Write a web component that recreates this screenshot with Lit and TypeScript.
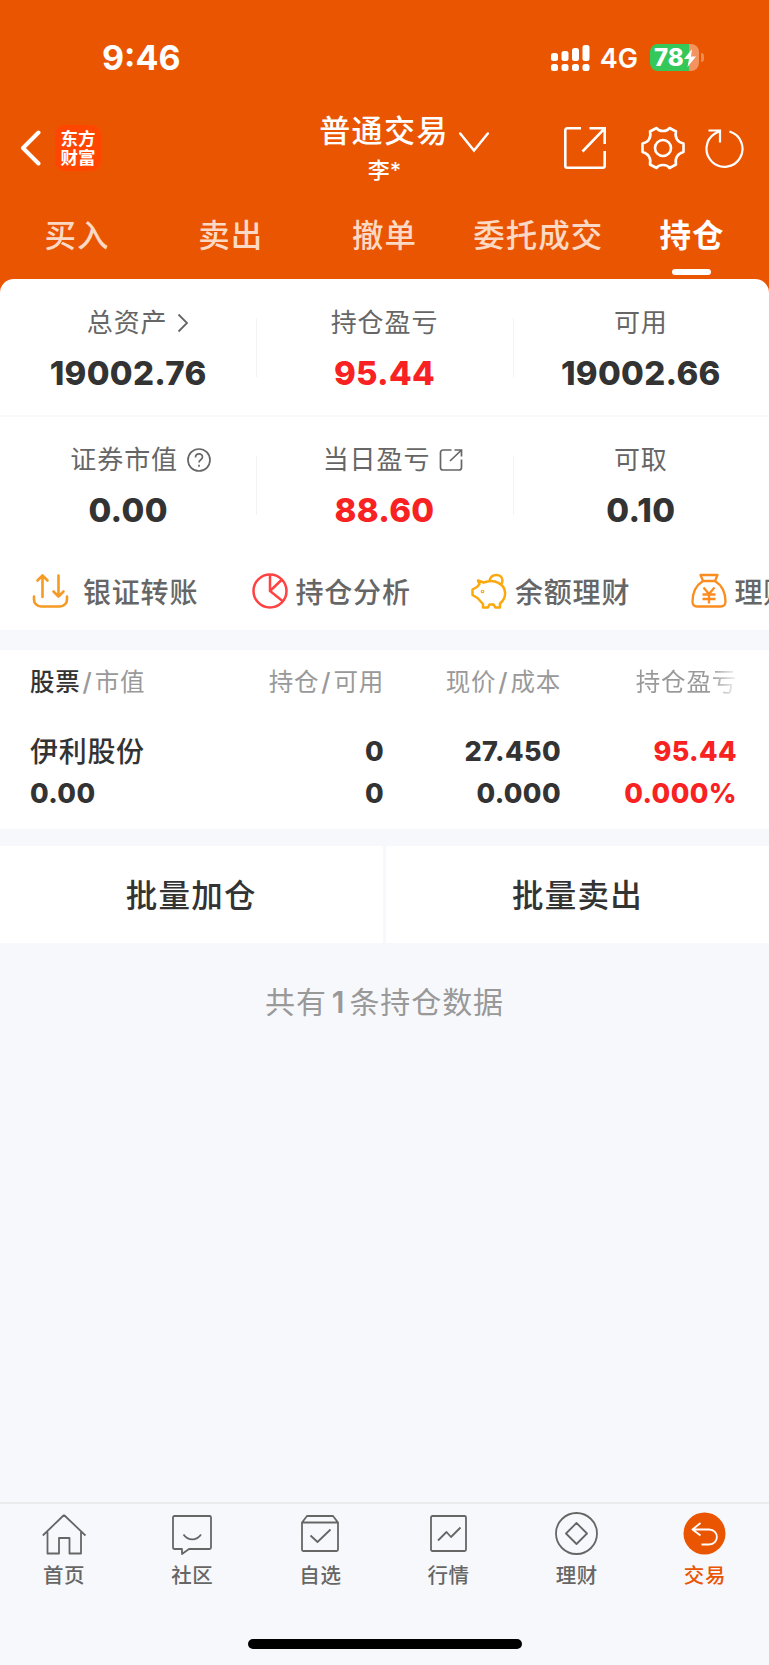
import { LitElement, html, css, svg } from "lit";
import { customElement } from "lit/decorators.js";

const chevronLeft = html`<svg class="back" width="22" height="36" viewBox="0 0 22 36"><path d="M18.5 2.5 3 18l15.500 15.500" fill="none" stroke="#fff" stroke-width="4" stroke-linecap="round" stroke-linejoin="round"/></svg>`;

const navIcons = [
  svg`<path d="M22 3 43.500 23.500M22 3 .8 23.500M5.500 20v21.500H17V26h10.500v15.500H39V20"/>`,
  svg`<path d="M4.500 4h35a1.500 1.500 0 0 1 1.500 1.500v30a1.500 1.500 0 0 1-1.500 1.500H19l-7 5v-5H4.500A1.500 1.500 0 0 1 3 35.500v-30A1.500 1.500 0 0 1 4.500 4zM13.500 22.500c4.500 6.500 13 6.500 17.500 0"/>`,
  svg`<path d="M4 10.500 9 4h26l5 6.500V37.500a1.500 1.500 0 0 1-1.500 1.500h-33A1.500 1.500 0 0 1 4 37.500zM4 10.500h36M12.500 23.500l7 6.500L32.500 17.500"/>`,
  svg`<rect x="4" y="4" width="35" height="35" rx="1.500"/><path d="M11 28.500l8.500-8.500 4.500 5 9.500-9.500"/>`,
  svg`<circle cx="21.500" cy="21.500" r="20.500"/><path d="M21.500 11 32 21.500 21.500 32 11 21.500z"/>`,
  svg`<circle cx="21.500" cy="21.500" r="21" fill="#ea5502" stroke="none"/><path d="M17.500 11 9.500 17.500l8 6M9.500 17.500H26c10.500 0 10.500 15 0 15h-7.500" stroke="#fff"/>`,
];

@customElement("app-root")
export class AppRoot extends LitElement {
  static styles = css`
    :host { display: flex; flex-direction: column; width: 769px; height: 1665px; overflow: hidden;
      background: #f7f8fb; color: #333; font-family: Inter, "Noto Sans CJK SC", sans-serif; white-space: nowrap; }
    * { box-sizing: border-box; }
    svg { display: block; flex: none; }
    .head { background: #ea5502; height: 293px; flex: none; color: #fff; }
    .status { height: 100px; display: flex; align-items: center; padding: 15px 65px 0 102px; }
    .time { font-size: 34px; font-weight: 700; line-height: 40px; flex: 1; }
    .net { font-size: 27px; font-weight: 600; margin: 2px 12px 0 10px; line-height: 32px; }
    .bat { display: flex; align-items: center; gap: 2px; }
    .cell { width: 49px; height: 27px; border-radius: 8px; display: flex; align-items: center; padding-left: 4px;
      background: linear-gradient(90deg, #34c759 38.500px, #f29360 38.500px); font-size: 24px; font-weight: 800; }
    .nub { width: 3px; height: 9px; border-radius: 0 3px 3px 0; background: #f08b54; }
    .bar { height: 97px; display: grid; grid-template-columns: 250px 1fr 250px; align-items: center; }
    .left { display: flex; align-items: center; padding: 0 0 1px 20px; gap: 13px; }
    .logo { width: 46px; height: 46px; border-radius: 10px; background: #ff4600; font: 700 17.500px/19px "Noto Sans CJK SC", sans-serif;
      padding: 3px 5px 0; white-space: normal; text-align: center; }
    .mid { display: flex; flex-direction: column; align-items: center; padding-top: 1px; }
    .title { display: flex; align-items: center; gap: 10px; font-size: 31px; font-weight: 500; letter-spacing: 1.400px; line-height: 42px; height: 42px; padding-left: 39px; }
    .title svg { margin-top: 22px; }
    .who { font-size: 22px; font-weight: 500; line-height: 36px; }
    .right { display: flex; align-items: center; padding: 0 0 1px 45px; }
    .gear { margin-left: 35px; }
    .reload { margin-left: 20px; }
    .tabs { display: grid; grid-template-columns: repeat(5, 1fr); font-size: 31.500px; font-weight: 500; letter-spacing: 1px; line-height: 44px; padding-top: 17px; }
    .tab { display: flex; flex-direction: column; align-items: center; color: #fcd9c4; }
    .tab.on { color: #fff; font-weight: 700; }
    .tab.on::after { content: ""; width: 39px; height: 6px; border-radius: 3px; background: #fff; margin: 11px 2px 0 0; }
    .card { background: #fff; border-radius: 14px 14px 0 0; margin-top: -14px; height: 351px; flex: none; overflow: hidden; }
    .stats { display: grid; grid-template-columns: repeat(3, 1fr); height: 136px; }
    .stats.first { height: 138px; border-bottom: 2px solid #f7f8fa; }
    .stat { display: flex; flex-direction: column; align-items: center; padding-top: 23px; }
    .first .stat { padding-top: 24px; }
    .stat + .stat { background: linear-gradient(#f2f3f5, #f2f3f5) 0 39px / 1px 59px no-repeat; }
    .label { display: flex; align-items: center; gap: 9px; font-size: 26px; letter-spacing: .9px; line-height: 40px; color: #666; }
    .shift-lg { padding-left: 25px; }
    .shift-md { padding-left: 19px; }
    .shift-sm { padding-left: 17px; }
    .value { font-size: 33px; font-weight: 800; line-height: 40px; margin-top: 10px; letter-spacing: .3px; }
    .red { color: #f82222; }
    .quick { display: flex; height: 76px; align-items: center; padding-left: 32px; color: #666; font-size: 28px; font-weight: 500; letter-spacing: .8px; }
    .q { display: flex; align-items: center; gap: 7px; width: 219.500px; flex: none; }
    .q:first-child { gap: 14px; }
    .table { background: #fff; margin-top: 20px; height: 179px; flex: none; padding: 14px 32px 0 30px; }
    .row { display: grid; grid-template-columns: 150px 204px 177px 176px; text-align: right; font-size: 27px; font-weight: 800; letter-spacing: .4px; line-height: 42px; }
    .row > :first-child { text-align: left; }
    .th { font-size: 24.500px; font-weight: 400; letter-spacing: .8px; line-height: 36px; color: #999; margin-bottom: 31px; }
    .slash { font-size: 25px; font-weight: 500; margin: 0 2px; }
    .dark { color: #333; font-weight: 500; }
    .name { font-size: 28px; font-weight: 500; letter-spacing: .7px; }
    .fade { background: linear-gradient(90deg, #999 74%, #fff 103%); -webkit-background-clip: text; color: transparent; }
    .batch { display: grid; grid-template-columns: 382.500px 383px; gap: 3.500px; margin-top: 17px; height: 97px; flex: none; }
    .btn { background: #fff; display: flex; align-items: center; justify-content: center; font-size: 31.500px; font-weight: 500; letter-spacing: 1.200px; padding-bottom: 4px; }
    .total { text-align: center; margin-top: 37px; line-height: 44px; font-size: 30px; letter-spacing: .9px; color: #999; flex: 1; }
    .count { font-weight: 600; margin: 0 4px 0 5px; }
    .nav { height: 163px; border-top: 2px solid #ebecee; display: grid; grid-template-columns: repeat(6, 1fr); padding-top: 8px; align-content: start; }
    .item { display: flex; flex-direction: column; align-items: center; font-size: 20.500px; font-weight: 500; letter-spacing: .6px; line-height: 30px; gap: 6px; color: #666; height: 80px; }
    .item.on { color: #ea5502; }
    .home { grid-column: 1 / -1; justify-self: center; width: 274px; height: 10px; border-radius: 5px; background: #000; margin-top: 47px; }
  `;

  stat(label: unknown, value: string, red = false, shift = "") {
    return html`<div class="stat"><div class="label ${shift}">${label}</div><div class="value ${red ? "red" : ""}">${value}</div></div>`;
  }

  pair(a: string, b: string, lead = false) {
    return html`<span><span class=${lead ? "dark" : ""}>${a}</span><span class="slash">/</span>${b}</span>`;
  }

  render() {
    return html`
      <div class="head">
        <div class="status">
          <div class="time">9:46</div>
          <svg width="39" height="28" viewBox="0 0 39 28" fill="#fff">
            <rect x="0" y="9" width="7" height="8" rx="2.500"/><rect x="10.500" y="7" width="7" height="10" rx="2.500"/><rect x="21" y="4" width="7" height="13" rx="2.500"/><rect x="31.500" y="1" width="7" height="16" rx="2.500"/>
            ${[0, 10.5, 21, 31.5].map((x) => svg`<rect x=${x} y="20" width="7" height="7" rx="2.500"/>`)}
          </svg>
          <div class="net">4G</div>
          <div class="bat"><div class="cell">78<svg width="12" height="18" viewBox="0 0 12 18"><path d="M8 0 0 10h5L3.500 18 12 7.500H7z" fill="#fff"/></svg></div><div class="nub"></div></div>
        </div>
        <div class="bar">
          <div class="left">${chevronLeft}<div class="logo">东方财富</div></div>
          <div class="mid">
            <div class="title">普通交易<svg width="30" height="21" viewBox="0 0 30 21"><path d="M1.200 1.500 15 18.500 28.800 1.500" fill="none" stroke="#fff" stroke-width="2.500" stroke-linecap="round"/></svg></div>
            <div class="who">李*</div>
          </div>
          <div class="right">
            <svg width="42" height="42" viewBox="0 0 42 42" fill="none" stroke="#fff" stroke-width="2.600"><path d="M17 1.300H3.300a2 2 0 0 0-2 2V38.700a2 2 0 0 0 2 2H38.700a2 2 0 0 0 2-2V24M25.500 1.300H40.700V17M40.700 1.300 18.500 24.500"/></svg>
            <svg class="gear" width="44" height="44" viewBox="0 0 44 44" fill="none" stroke="#fff" stroke-width="2.600" stroke-linejoin="round"><path d="M15.500 2C18 6 26 6 28.500 2L35 5.500C33.500 11.500 36.500 16.500 42.500 17.500V26C36.500 27.500 33.500 32.500 35 38.500L28.500 42C26 38 18 38 15.500 42L9 38.500C10.500 32.500 7.500 27.500 1.500 26V17.500C7.500 16.500 10.500 11.500 9 5.500z"/><circle cx="22" cy="22" r="8"/></svg>
            <svg class="reload" width="40" height="40" viewBox="0 0 40 40" fill="none" stroke="#fff" stroke-width="2.200"><path d="M24.500 3.500A18 18 0 1 1 10 5.500L15 3M3.500 2.500H15V14.500"/></svg>
          </div>
        </div>
        <div class="tabs">${["买入", "卖出", "撤单", "委托成交", "持仓"].map((t, i) => html`<div class="tab ${i === 4 ? "on" : ""}">${t}</div>`)}</div>
      </div>
      <div class="card">
        <div class="stats first">
          ${this.stat(html`总资产<svg width="12" height="20" viewBox="0 0 12 20"><path d="M1.500 1.500 10 10 1.500 18.500" fill="none" stroke="#666" stroke-width="1.800"/></svg>`, "19002.76", false, "shift-md")}
          ${this.stat("持仓盈亏", "95.44", true)}
          ${this.stat("可用", "19002.66")}
        </div>
        <div class="stats">
          ${this.stat(html`证券市值<svg width="24" height="24" viewBox="0 0 24 24" fill="none" stroke="#666" stroke-width="1.700"><circle cx="12" cy="12" r="11"/><path d="M8.500 9.500C8.500 4.700 15.500 4.700 15.500 9c0 2.800-3.500 2.700-3.500 5.500M12 16.700v2"/></svg>`, "0.00", false, "shift-lg")}
          ${this.stat(html`当日盈亏<svg width="24" height="24" viewBox="0 0 24 24" fill="none" stroke="#666" stroke-width="1.700"><path d="M12.500 2H4a2.500 2.500 0 0 0-2.500 2.500V19.500A2.500 2.500 0 0 0 4 22H20a2.500 2.500 0 0 0 2.500-2.500V11.500M15.500 2H22.500V8.500M22.500 2 11 13"/></svg>`, "88.60", true, "shift-sm")}
          ${this.stat("可取", "0.10")}
        </div>
        <div class="quick">
          <div class="q"><svg width="37" height="36" viewBox="0 0 37 36" fill="none" stroke="#f59a23" stroke-width="2.600" stroke-linecap="round" stroke-linejoin="round"><path d="M2 23.500v3a7 7 0 0 0 7 7H28a7 7 0 0 0 7-7v-3M10.500 24V2.500M5.500 7.500l5-5 5 5M26.500 2.500V23.500M21.500 18.500l5 5 5-5"/></svg>银证转账</div>
          <div class="q"><svg width="37" height="36" viewBox="0 0 37 36" fill="none" stroke="#ff4242" stroke-width="2.500"><circle cx="18" cy="18" r="16.500"/><path d="M18 1.500V18L30.500 28M18 18 30 6.500"/></svg>持仓分析</div>
          <div class="q"><svg width="37" height="36" viewBox="0 0 37 36" fill="none" stroke="#fba80a" stroke-width="2.500" stroke-linejoin="round"><path d="M7 7.500 12.500 9.500C17.500 7.500 23.500 7.500 27.500 10 36 14 36 25 29 30.500V34.500H24.500L22.500 31.500H18.500L17 34.500H12V31L6.500 25 1.500 22V16.500L6 14 8.500 11zM18.500 8C20 0 31 0 31.500 7.500 31.500 9 31 10.500 30 11.500"/><circle cx="11.500" cy="18.500" r=".6"/></svg>余额理财</div>
          <div class="q"><svg width="37" height="36" viewBox="0 0 37 36" fill="none" stroke="#fb8d20" stroke-width="2.300" stroke-linejoin="round"><path d="M12 8 9.500 2H26.500L24 8zM12 8C4 13 1.500 20 1.500 28.500 1.500 32 3 33.500 6 33.500H29.500C33 33.500 34.500 32 34.500 28.500 34.500 20 32 13 24 8M12.500 14.500l5.500 6.500 5.500-6.500M18 21V30.500M11.500 21.500h13M11.500 26h13"/></svg>理财</div>
        </div>
      </div>
      <div class="table">
        <div class="row th">${this.pair("股票", "市值", true)}${this.pair("持仓", "可用")}${this.pair("现价", "成本")}<span><span class="fade">持仓盈亏</span></span></div>
        <div class="row"><span class="name">伊利股份</span><span>0</span><span>27.450</span><span class="red">95.44</span></div>
        <div class="row"><span>0.00</span><span>0</span><span>0.000</span><span class="red">0.000%</span></div>
      </div>
      <div class="batch"><div class="btn">批量加仓</div><div class="btn">批量卖出</div></div>
      <div class="total">共有<span class="count">1</span>条持仓数据</div>
      <div class="nav">
        ${["首页", "社区", "自选", "行情", "理财", "交易"].map((t, i) => html`<div class="item ${i === 5 ? "on" : ""}"><svg width="44" height="43" viewBox="0 0 44 43" fill="none" stroke=${i === 5 ? "#ea5502" : "#666"} stroke-width="1.800" stroke-linejoin="round">${navIcons[i]}</svg>${t}</div>`)}
        <div class="home"></div>
      </div>
    `;
  }
}
